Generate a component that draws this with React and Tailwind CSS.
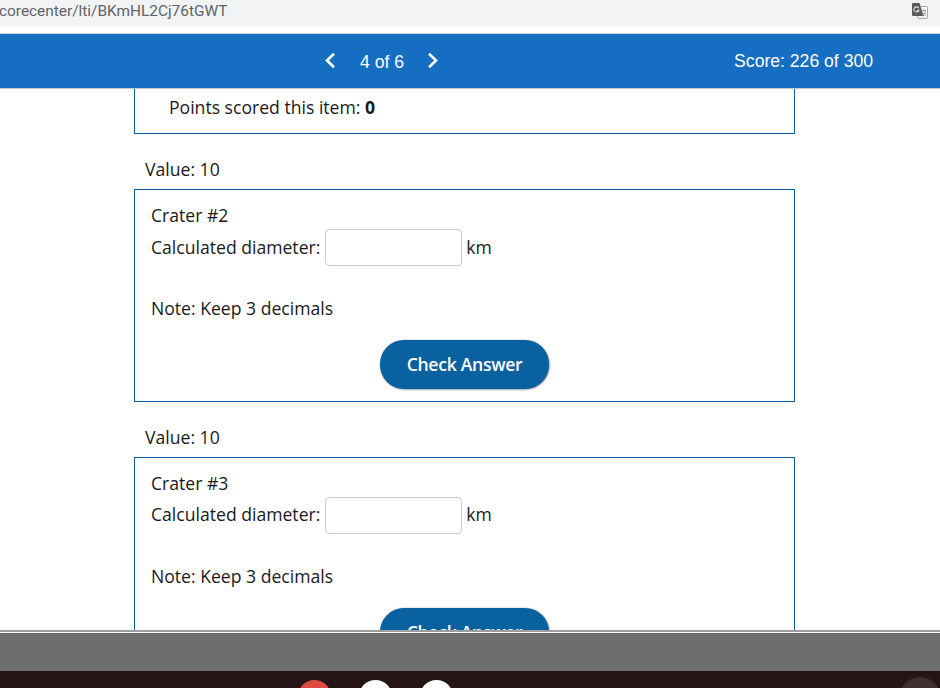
import React from 'react'

const Question = ({ name, clipped }) => (
	<>
		<p className="pl-[11px] mt-[24px] h-[22px] leading-[22px]">Value: 10</p>
		<div className={`mt-[9px] border border-[#0a619f] px-[16px] pt-[14px] ${clipped ? 'border-b-0 h-[400px]' : 'h-[213px]'}`}>
			<p className="h-[22px] leading-[22px]">{name}</p>
			<div className={`flex items-center h-[38px] ${clipped ? 'mt-[1px]' : 'mt-[2px]'}`}>
				<span>Calculated diameter:</span>
				<input className={`ml-[5px] w-[137px] h-[37px] bg-white border border-[#ccc] rounded-[4px] ${clipped ? 'mt-[2px]' : ''}`} />
				<span className="ml-[4px]">km</span>
			</div>
			<p className={`h-[22px] leading-[22px] ${clipped ? 'mt-[32px]' : 'mt-[31px]'}`}>Note: Keep 3 decimals</p>
			<div className="flex justify-center mt-[21px]">
				<button className="w-[169px] h-[49px] rounded-[24px] bg-[#0a619f] text-white font-semibold text-[17.6px] tracking-[-0.3px] shadow-[0.5px_0.5px_2px_#777]">Check Answer</button>
			</div>
		</div>
	</>
)

export default function App() {
	return (
		<div className="w-[940px] h-[688px] overflow-hidden flex flex-col bg-white text-[#1a1a1a] font-['Open_Sans','Noto_Sans',sans-serif] text-[17.6px]">
			{/* browser address bar */}
			<div className="h-[27px] shrink-0 bg-[#f1f3f4] flex items-start justify-between pr-[12px]">
				<span className="font-['Roboto',sans-serif] text-[15.4px] leading-[22px] text-[#5f6368] -ml-[1px]">corecenter/lti/BKmHL2Cj76tGWT</span>
				<svg width="16" height="16" viewBox="0 0 16 16" className="mt-[3px]">
					<rect x="5.5" y="3.5" width="10" height="12" rx="1" fill="#f4f5f5" stroke="#a8a8a8" />
					<path d="M10 7.5h4M12 6.5v1M10.8 13c1.6-1 2.4-3 2.6-5.5M11 9.5c.6 1.4 1.6 2.6 3 3.2" fill="none" stroke="#8a8a8a" strokeWidth="0.8" />
					<path d="M1 0h6.5l4 13H1a1 1 0 0 1-1-1V1a1 1 0 0 1 1-1z" fill="#5a5a5a" />
					<path d="M6.8 5.2A2.6 2.6 0 1 0 7 7.2H5" fill="none" stroke="#e8e8e8" strokeWidth="1.1" />
				</svg>
			</div>
			<div className="h-[6px] shrink-0 bg-white" />

			{/* score bar */}
			<header className="h-[56px] shrink-0 bg-[#156ec1] border-t border-[#c9d4de] border-b border-b-[#c8c8c8] flex items-center text-white font-['Liberation_Sans',sans-serif]">
				<div className="ml-[324px] flex items-center">
					<svg width="12" height="17" viewBox="0 0 12 17" fill="none" stroke="currentColor" strokeWidth="2.6">
						<path d="M10 1.8 3 8.5 10 15.2" />
					</svg>
					<span className="ml-[24px] mt-[3px] text-[17.6px]">4 of 6</span>
					<svg width="12" height="17" viewBox="0 0 12 17" fill="none" stroke="currentColor" strokeWidth="2.6" className="ml-[23px]">
						<path d="M2 1.8 9 8.5 2 15.2" />
					</svg>
				</div>
				<span className="ml-auto mr-[67px]">Score: 226 of 300</span>
			</header>

			{/* scrolling page */}
			<main className="h-[541px] shrink-0 overflow-hidden">
				<div className="ml-[134px] w-[661px]">
					<div className="h-[45px] border border-t-0 border-[#0a619f] pl-[34px] pt-[7px] leading-[22px]">
						Points scored this item: <b>0</b>
					</div>
					<Question name="Crater #2" />
					<Question name="Crater #3" clipped />
				</div>
			</main>

			{/* shelf */}
			<div className="h-[2px] shrink-0 bg-[#9e9e9e]" />
			<div className="h-[1px] shrink-0 bg-white" />
			<div className="h-[38px] shrink-0 bg-[#6e6e6e]" />
			<div className="flex-1 bg-[#261516] relative overflow-hidden">
				<span className="absolute left-[298px] top-[9px] w-[33px] h-[33px] rounded-full bg-[#dc4c3f]" />
				<span className="absolute left-[359px] top-[9px] w-[33px] h-[33px] rounded-full bg-white" />
				<span className="absolute left-[420px] top-[9px] w-[33px] h-[33px] rounded-full bg-white" />
				<span className="absolute left-[900px] top-[6px] w-[40px] h-[40px] rounded-full bg-[#3f2f30]" />
			</div>
		</div>
	)
}
